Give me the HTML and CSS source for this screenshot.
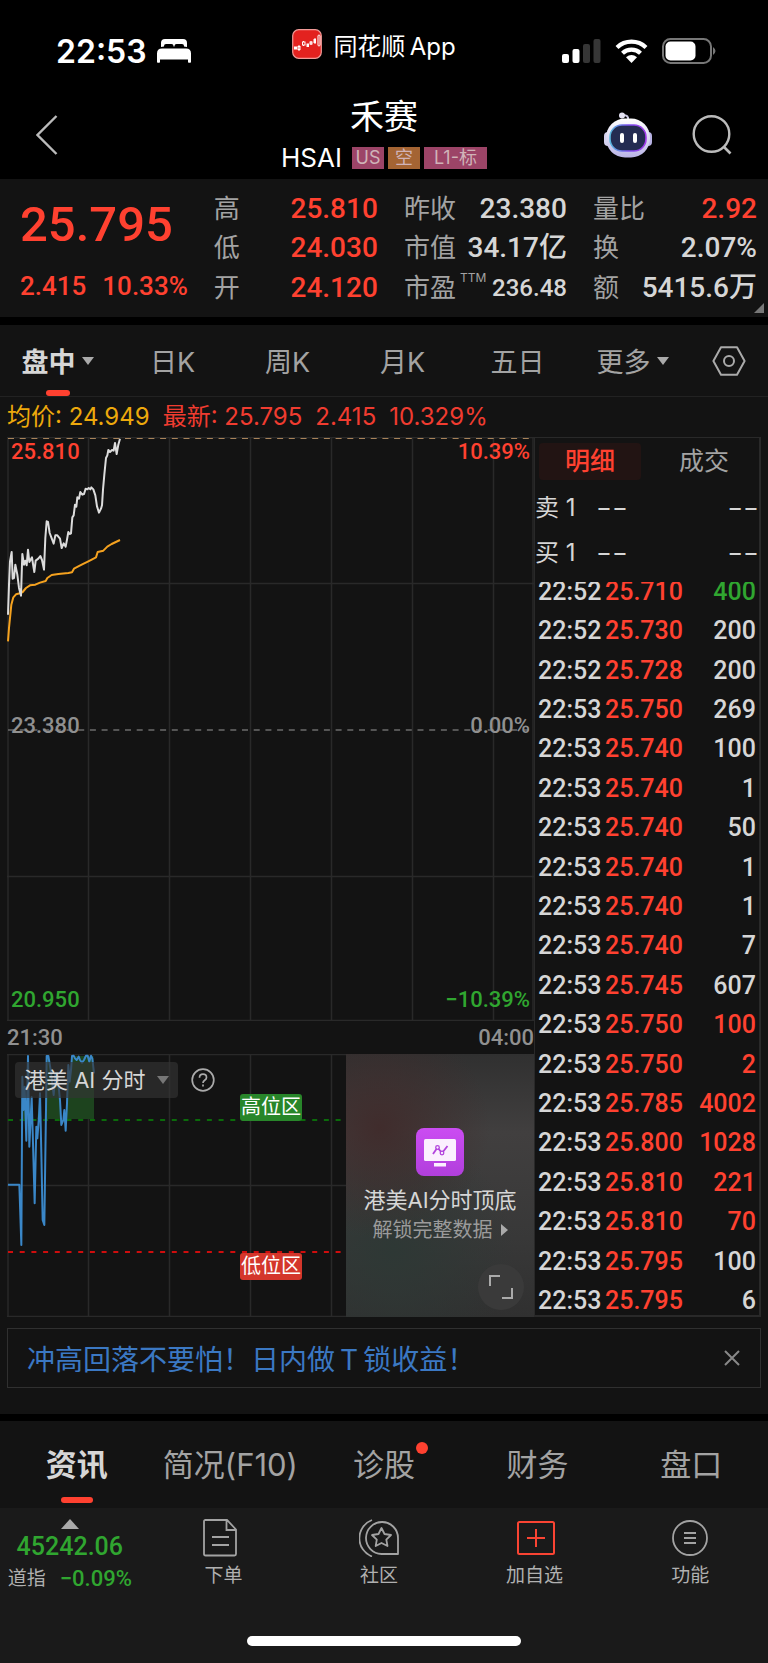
FILE: index.html
```html
<!DOCTYPE html>
<html lang="zh-CN">
<head>
<meta charset="utf-8">
<meta name="viewport" content="width=device-width, initial-scale=1">
<title>禾赛 HSAI</title>
<link rel="stylesheet" href="styles.css">
</head>
<body>
<div class="status">
  <div class="status-left">
    <time class="clock">22:53</time>
    <svg class="bed" viewBox="0 0 34 24" aria-hidden="true"><path fill="#fff" d="M4 8V4q0-4 4-4h18q4 0 4 4v4q-1.500-.5-3-.5V7q0-2-2-2h-5.500q-2 0-2 2v.5h-1V7q0-2-2-2H9Q7 5 7 7v.5q-1.500 0-3 .5zM5 9.500h24q5 0 5 5V23q0 .8-.8.8h-1.400q-.8 0-.8-.8v-2.500H3V23q0 .8-.8.8H.800Q0 23.800 0 23v-8.500q0-5 5-5z"/></svg>
  </div>
  <div class="status-app">
    <svg class="app-icon" viewBox="0 0 30 30" aria-hidden="true"><rect x=".7" y=".7" width="28.600" height="28.600" rx="6" fill="#e3221f" stroke="#f19a97" stroke-width="1.200"/><g stroke="#fff" stroke-width="1" fill="none"><path d="M7 16v6M11.500 12v5M19 12v4M23 9v6"/><rect x="6" y="17.500" width="2" height="3"/><rect x="10.500" y="13" width="2.500" height="3" fill="#e3221f"/><rect x="18" y="13" width="2" height="2"/><rect x="26" y="6" width="2" height="11" rx="1"/></g><path fill="#fff" d="M2 17.500h3v3H2zM14.500 14.500H17V18h-2.500zM21.500 10H24v4h-2.500z"/></svg>
    <span>同花顺&#8201;App</span>
  </div>
  <div class="status-right">
    <svg class="signal" viewBox="0 0 39 24" aria-hidden="true"><rect y="15" width="7" height="9" rx="2" fill="#fff"/><rect x="10.500" y="10" width="7" height="14" rx="2" fill="#fff"/><rect x="21" y="5" width="7" height="19" rx="2" fill="#363636"/><rect x="31.500" width="7" height="24" rx="2" fill="#363636"/></svg>
    <svg class="wifi" viewBox="0 0 33 24" aria-hidden="true"><path d="M2 8.500a21 21 0 0 1 29 0M7.500 14.200a13 13 0 0 1 18 0" fill="none" stroke="#fff" stroke-width="4.200"/><path fill="#fff" d="M11 18.200q5.500-4.600 11 0L16.500 24z"/></svg>
    <svg class="battery" viewBox="0 0 54 26" aria-hidden="true"><rect x="1" y="1" width="48" height="24" rx="7.500" fill="none" stroke="#777" stroke-width="2"/><rect x="3.500" y="3.500" width="30" height="19" rx="5" fill="#fff"/><path d="M51 9q5 4 0 8z" fill="#777"/></svg>
  </div>
</div>

<header class="header">
  <button class="icon-btn back" aria-label="返回"><svg width="22" height="40" viewBox="0 0 22 40"><path d="M20.500 1 1.500 20l19 19" fill="none" stroke="#bbb" stroke-width="2.400"/></svg></button>
  <div class="title">
    <h1>禾赛</h1>
    <div class="code-line"><span class="code">HSAI</span><span class="tag pink">US</span><span class="tag brown">空</span><span class="tag pink wide">L1-标</span></div>
  </div>
  <div class="header-actions">
    <button class="icon-btn" aria-label="智能助手"><svg width="48" height="46" viewBox="0 0 48 46"><defs><linearGradient id="shell" x2="0" y2="1"><stop stop-color="#fff"/><stop offset="1" stop-color="#b9b4e6"/></linearGradient><linearGradient id="rim"><stop stop-color="#58b9dd"/><stop offset=".5" stop-color="#7b4ff0"/><stop offset="1" stop-color="#a33bea"/></linearGradient></defs><path d="M24 8q1-5-5-5" fill="none" stroke="#ccc9e4" stroke-width="2"/><circle cx="18" cy="3.500" r="3" fill="#e4e2f2"/><rect y="20" width="10" height="14" rx="4" fill="#d5d2ef"/><rect x="38" y="20" width="10" height="14" rx="4" fill="#b7b2e3"/><rect x="2" y="6.500" width="44" height="39" rx="19" fill="url(#shell)"/><rect x="6" y="13" width="36" height="26" rx="12" fill="#242c52" stroke="url(#rim)" stroke-width="1.600"/><rect x="16" y="21" width="4" height="10" rx="2" fill="#fff"/><rect x="29" y="21" width="4" height="10" rx="2" fill="#fff"/></svg></button>
    <button class="icon-btn" aria-label="搜索"><svg width="40" height="40" viewBox="0 0 40 40"><circle cx="19.500" cy="19" r="17.800" fill="none" stroke="#bbb" stroke-width="2.400"/><path d="m32 32 6.500 6.500" stroke="#bbb" stroke-width="2.600"/></svg></button>
  </div>
</header>

<section class="quote">
  <div class="price">
    <strong>25.795</strong>
    <div class="change"><span>2.415</span><span>10.33%</span></div>
  </div>
  <dl class="stats">
    <div><dt>高</dt><dd class="up">25.810</dd></div>
    <div><dt>低</dt><dd class="up">24.030</dd></div>
    <div><dt>开</dt><dd class="up">24.120</dd></div>
  </dl>
  <dl class="stats">
    <div><dt>昨收</dt><dd>23.380</dd></div>
    <div><dt>市值</dt><dd>34.17亿</dd></div>
    <div><dt>市盈<sup>TTM</sup></dt><dd class="small">236.48</dd></div>
  </dl>
  <dl class="stats">
    <div><dt>量比</dt><dd class="up">2.92</dd></div>
    <div><dt>换</dt><dd>2.07%</dd></div>
    <div><dt>额</dt><dd>5415.6万</dd></div>
  </dl>
  <svg class="corner" viewBox="0 0 10 10" aria-hidden="true"><path d="M10 0v10H0z" fill="#777"/></svg>
</section>

<nav class="periods" aria-label="周期">
  <button class="active">盘中<svg class="caret" viewBox="0 0 12 8"><path d="M0 0h12L6 8z" fill="#aaa"/></svg></button>
  <button>日K</button>
  <button>周K</button>
  <button>月K</button>
  <button>五日</button>
  <button>更多<svg class="caret" viewBox="0 0 12 8"><path d="M0 0h12L6 8z" fill="#aaa"/></svg></button>
  <button aria-label="设置"><svg width="34" height="30" viewBox="0 0 34 30"><path d="M9 1.200h16L32.600 15 25 28.800H9L1.400 15z" fill="none" stroke="#aaa" stroke-width="2" stroke-linejoin="round"/><circle cx="17" cy="15" r="5" fill="none" stroke="#aaa" stroke-width="2"/></svg></button>
</nav>

<div class="latest">
  <span class="avg">均价: 24.949</span>
  <span>最新: 25.795</span>
  <span>2.415</span>
  <span>10.329%</span>
</div>

<main class="board">
  <div class="charts">
    <div class="chart">
      <svg viewBox="0 0 527 584" role="img" aria-label="分时走势">
        <path d="M1 0v584M81.500 0v584M162.500 0v584M243.500 0v584M324.500 0v584M405.500 0v584M486.500 0v584M526 0v584M0 .5h527M0 146.500h527M0 439.500h527M0 583.500h527" stroke="#292929" stroke-width="1.500"/>
        <path d="M1 1.500h526" stroke="#a8835a" stroke-dasharray="6 5.700"/>
        <path d="M1 293h526" stroke="#6c6c6c" stroke-width="1.500" stroke-dasharray="6 5.700"/>
        <g transform="translate(-7 -9) scale(.33333)" fill="none" stroke-linejoin="round">
          <polyline stroke="#f5a21f" stroke-width="6" points="24,640 27,600 31,560 34,530 40,508 48,499 60,496 68,492 78,480 90,472 106,470 120,464 137,459 142,450 155,441 175,438 205,435 216,433 222,422 245,410 265,400 288,388 293,372 310,368 322,356 335,348 360,336"/>
          <polyline stroke="#dcdcdc" stroke-width="6" points="24,560 27,470 30,400 35,372 38,452 42,450 46,410 52,440 57,480 63,503 67,378 72,410 76,398 80,412 84,365 88,402 96,388 99,408 103,432 107,398 115,392 121,384 126,396 132,425 136,330 140,280 144,282 149,315 154,328 161,347 166,322 172,322 180,332 185,360 191,346 197,356 201,335 205,312 209,318 213,316 217,268 221,262 225,230 229,236 232,208 237,212 241,192 247,200 252,198 257,182 262,184 266,180 271,184 274,178 280,184 286,202 291,235 297,254 303,242 306,232 309,185 313,140 318,90 322,82 325,66 330,72 336,66 341,68 345,45 350,78 355,50 360,32"/>
        </g>
      </svg>
      <div class="scale">
        <div class="up"><span>25.810</span><span>10.39%</span></div>
        <div><span>23.380</span><span>0.00%</span></div>
        <div class="down"><span>20.950</span><span>−10.39%</span></div>
      </div>
    </div>
    <div class="axis"><span>21:30</span><span>04:00</span></div>
    <div class="chart">
      <svg viewBox="0 0 527 263" role="img" aria-label="港美AI分时指标">
        <defs><clipPath id="upper"><rect x="20" y="133" width="270" height="195"/></clipPath></defs>
        <path d="M1 0v263M81.500 0v263M162.500 0v263M243.500 0v263M324.500 0v263M405.500 0v263M486.500 0v263M526 0v263M0 .5h527M0 131.500h527M0 262.500h527" stroke="#292929" stroke-width="1.500"/>
        <path d="M1 66h340" stroke="#0b6b0b" stroke-width="2" stroke-dasharray="5 6.700"/>
        <path d="M1 198h340" stroke="#cf0d0d" stroke-width="2" stroke-dasharray="5 6.700"/>
        <g transform="translate(-7 -44) scale(.33333)">
          <path clip-path="url(#upper)" fill="#1d431e" d="M64 328 67 200 70 300 74 230 79 328 84 138 88 328 95 262 99 328H112L120 250 124 328H134L140 138H145L152 180 161 255 166 190H172L180 270 184 328H199L205 165 209 215 213 180 216 138H280L282 190V328z"/>
          <polyline fill="none" stroke="#3a87c8" stroke-width="6" stroke-linejoin="round" points="24,524 58,524 64,705 67,200 70,300 74,230 79,392 84,138 88,410 95,262 99,400 104,580 109,350 112,385 117,320 120,250 124,430 128,630 133,645 138,300 140,138 145,138 152,180 161,255 166,190 172,190 180,270 184,345 190,330 193,300 197,362 201,280 205,165 209,215 213,180 216,138 221,137 225,145 230,150 236,140 240,150 246,158 252,150 258,137 263,137 268,155 273,137 277,145 282,190"/>
        </g>
      </svg>
      <div class="indicator">
        <button class="picker">港美 AI 分时<svg class="caret" viewBox="0 0 12 8"><path d="M0 0h12L6 8z" fill="#777"/></svg></button>
        <button class="icon-btn" aria-label="帮助"><svg width="24" height="24" viewBox="0 0 24 24" fill="none" stroke="#aaa" stroke-width="1.700"><circle cx="12" cy="12" r="10.800"/><path d="M8.500 9.800q0-3.600 3.500-3.600t3.500 3.200q0 1.600-1.800 2.800Q12 13.300 12 15"/><path d="M12 16.500v2"/></svg></button>
      </div>
      <span class="zone high">高位区</span>
      <span class="zone low">低位区</span>
      <div class="unlock">
        <svg class="unlock-icon" viewBox="0 0 48 48" aria-hidden="true"><defs><linearGradient id="violet" x2="0" y2="1"><stop stop-color="#cb4cf2"/><stop offset="1" stop-color="#b13fdc"/></linearGradient></defs><rect width="48" height="48" rx="8" fill="url(#violet)"/><rect x="8" y="11" width="32" height="22" rx="1.500" fill="#fbf0fe"/><rect x="18" y="35" width="12" height="3.500" fill="#fbf0fe"/><path d="m17 26 4.500-6.500L26 25l5.500-7" fill="none" stroke="#b244dd" stroke-width="1.800"/><circle cx="21.500" cy="19.500" r="1.800" fill="#fbf0fe" stroke="#b244dd" stroke-width="1.300"/><circle cx="26" cy="25" r="1.800" fill="#fbf0fe" stroke="#b244dd" stroke-width="1.300"/></svg>
        <strong>港美AI分时顶底</strong>
        <a href="#unlock">解锁完整数据<svg width="7" height="12" viewBox="0 0 7 12"><path d="M0 0l7 6-7 6z" fill="#aaa"/></svg></a>
        <button class="expand" aria-label="全屏"><svg width="24" height="24" viewBox="0 0 24 24"><path d="M1 11V1h10M23 13v10H13" fill="none" stroke="#aaa" stroke-width="2"/></svg></button>
      </div>
    </div>
  </div>

  <aside class="trades">
    <div class="trade-tabs"><button class="active">明细</button><button>成交</button></div>
    <div class="levels">
      <div class="level"><span>卖 1</span><span>−−</span><span>−−</span></div>
      <div class="level"><span>买 1</span><span>−−</span><span>−−</span></div>
    </div>
    <div class="ticks">
      <table>
        <tbody>
          <tr><td>22:52</td><td>25.710</td><td class="down">400</td></tr>
          <tr><td>22:52</td><td>25.730</td><td>200</td></tr>
          <tr><td>22:52</td><td>25.728</td><td>200</td></tr>
          <tr><td>22:53</td><td>25.750</td><td>269</td></tr>
          <tr><td>22:53</td><td>25.740</td><td>100</td></tr>
          <tr><td>22:53</td><td>25.740</td><td>1</td></tr>
          <tr><td>22:53</td><td>25.740</td><td>50</td></tr>
          <tr><td>22:53</td><td>25.740</td><td>1</td></tr>
          <tr><td>22:53</td><td>25.740</td><td>1</td></tr>
          <tr><td>22:53</td><td>25.740</td><td>7</td></tr>
          <tr><td>22:53</td><td>25.745</td><td>607</td></tr>
          <tr><td>22:53</td><td>25.750</td><td class="up">100</td></tr>
          <tr><td>22:53</td><td>25.750</td><td class="up">2</td></tr>
          <tr><td>22:53</td><td>25.785</td><td class="up">4002</td></tr>
          <tr><td>22:53</td><td>25.800</td><td class="up">1028</td></tr>
          <tr><td>22:53</td><td>25.810</td><td class="up">221</td></tr>
          <tr><td>22:53</td><td>25.810</td><td class="up">70</td></tr>
          <tr><td>22:53</td><td>25.795</td><td>100</td></tr>
          <tr><td>22:53</td><td>25.795</td><td>6</td></tr>
        </tbody>
      </table>
    </div>
  </aside>
</main>

<div class="banner">
  <a href="#promo">冲高回落不要怕！日内做&#8201;T&#8201;锁收益！</a>
  <button class="icon-btn" aria-label="关闭"><svg width="16" height="16" viewBox="0 0 16 16"><path d="m1 1 14 14M15 1 1 15" stroke="#888" stroke-width="2"/></svg></button>
</div>

<nav class="sections" aria-label="资料">
  <button class="active">资讯</button>
  <button>简况(F10)</button>
  <button><span class="dotted">诊股</span></button>
  <button>财务</button>
  <button>盘口</button>
</nav>

<footer class="footer">
  <div class="toolbar">
    <button class="index">
      <svg width="18" height="10" viewBox="0 0 18 10"><path d="M9 0l9 10H0z" fill="#aaa"/></svg>
      <span class="index-value">45242.06</span>
      <span class="index-line"><span>道指</span><span class="index-change">−0.09%</span></span>
    </button>
    <button><svg width="40" height="38" viewBox="0 0 40 38" fill="none" stroke="#a3a3a3" stroke-width="1.800"><path d="M5 1h19l9 9.500V35q0 1.500-1.500 1.500h-29Q1 36.500 1 35V2.500Q1 1 2.500 1H5zM23.500 1v10H33M9 18h17M9 26h17"/></svg>下单</button>
    <button><svg width="40" height="38" viewBox="0 0 40 38" fill="none" stroke="#a3a3a3" stroke-width="1.800"><path d="M39 35H22.500A16 16 0 1 1 39 19z" stroke-linejoin="round"/><path d="M13 1a19.500 19.500 0 0 0 0 36.500"/><path stroke-linejoin="round" d="m22.500 9 3 6 6.500 1-4.700 4.600 1.200 6.400-6-3-5.800 3 1.100-6.400-4.800-4.600 6.500-1z"/></svg>社区</button>
    <button><svg width="40" height="38" viewBox="0 0 40 38" fill="none" stroke="#fa4433" stroke-width="2"><rect x="3" y="3" width="36" height="32" rx="1.500"/><path d="M21 10v18M12 19h18"/></svg>加自选</button>
    <button><svg width="40" height="38" viewBox="0 0 40 38" fill="none" stroke="#a3a3a3" stroke-width="1.800"><circle cx="20" cy="19" r="17"/><path d="M14 14h12M14 19h12M14 24h12"/></svg>功能</button>
  </div>
  <div class="home-bar"></div>
</footer>
</body>
</html>
```
FILE: styles.css
```css
* {
  box-sizing: border-box;
}

:root {
  --bg: #131313;
  --line: #292929;
  --red: #ff4130;
  --green: #30a630;
  --muted: #a3a3a3;
  --light: #d6d6d6;
  --num: Roboto, "Noto Sans CJK SC", sans-serif;
}

body {
  margin: 0;
  background: var(--bg);
  color: var(--light);
  font-family: Inter, "Noto Sans CJK SC", sans-serif;
}

button {
  margin: 0;
  padding: 0;
  border: 0;
  background: none;
  color: inherit;
  font: inherit;
}

a {
  text-decoration: none;
}

svg {
  display: block;
}

h1,
dl,
dd {
  margin: 0;
}

.up {
  color: var(--red);
}

.down {
  color: var(--green);
}

.icon-btn {
  display: flex;
}

.caret {
  width: 12px;
  height: 8px;
}

/* Status bar */
.status {
  display: grid;
  grid-template-columns: 237fr auto 261fr;
  height: 90px;
  padding: 12px 52px 0 56px;
  background: #000;
  color: #fff;
}

.status-left,
.status-right {
  display: flex;
  align-items: center;
}

.status-left {
  gap: 10px;
}

.status-right {
  justify-content: flex-end;
  gap: 14px;
}

.clock {
  font-size: 32px;
  font-weight: 600;
}

.bed {
  width: 34px;
  height: 24px;
}

.status-app {
  display: flex;
  align-items: center;
  gap: 11px;
  padding-bottom: 14px;
  font-size: 24px;
}

.app-icon {
  width: 30px;
  height: 30px;
}

.signal {
  width: 39px;
  height: 24px;
}

.wifi {
  width: 33px;
  height: 24px;
}

.battery {
  width: 54px;
  height: 26px;
}

/* Header */
.header {
  display: grid;
  grid-template-columns: 1fr auto 1fr;
  align-items: center;
  height: 89px;
  padding: 0 36px;
  background: #000;
}

.title {
  display: flex;
  flex-direction: column;
  align-items: center;
  gap: 4px;
}

.title h1 {
  color: #fff;
  font-size: 34px;
  font-weight: 400;
  line-height: 42px;
}

.code-line {
  display: flex;
  align-items: center;
  gap: 4px;
}

.code {
  margin-right: 6px;
  color: #fff;
  font-size: 26px;
  line-height: 32px;
}

.tag {
  min-width: 32px;
  color: #d0b3b8;
  font-size: 18px;
  line-height: 22px;
  text-align: center;
}

.pink {
  background: #9c4467;
}

.brown {
  background: #a46433;
}

.wide {
  min-width: 63px;
}

.header-actions {
  display: flex;
  align-items: center;
  justify-content: flex-end;
  gap: 40px;
}

/* Quote */
.quote {
  position: relative;
  display: grid;
  grid-template-columns: 167fr 164fr 163fr 164fr;
  column-gap: 26px;
  height: 138px;
  padding: 10px 11px 9px 20px;
  font-family: var(--num);
}

.price {
  display: flex;
  flex-direction: column;
  justify-content: space-between;
  padding: 7px 0 1px;
  color: var(--red);
}

.price strong {
  font-size: 49px;
  font-weight: 500;
  line-height: 58px;
}

.change {
  display: flex;
  gap: 16px;
  font-size: 26px;
  font-weight: 500;
  line-height: 42px;
  white-space: nowrap;
}

.stats {
  display: grid;
  grid-template-rows: repeat(3, 1fr);
  white-space: nowrap;
}

.stats div {
  display: flex;
  align-items: center;
  justify-content: space-between;
}

.stats dt {
  color: var(--muted);
  font-size: 26px;
  line-height: 38px;
}

.stats sup {
  margin-left: 4px;
  font-family: Inter, sans-serif;
  font-size: 12px;
  line-height: 12px;
  vertical-align: 15px;
}

.stats dd {
  font-size: 28px;
  font-weight: 500;
  line-height: 38px;
}

.stats .small {
  font-size: 24px;
}

.corner {
  position: absolute;
  right: 4px;
  bottom: 4px;
  width: 10px;
  height: 10px;
}

/* Period tabs */
.periods {
  display: grid;
  grid-template-columns: repeat(6, 115fr) 78fr;
  height: 80px;
  border-top: 8px solid #000;
  border-bottom: 1px solid #222;
  color: var(--muted);
  font-size: 27px;
}

.periods button {
  position: relative;
  display: flex;
  align-items: center;
  justify-content: center;
  gap: 6px;
}

.periods .active,
.sections .active {
  color: var(--light);
  font-weight: 700;
}

.periods .active::after,
.sections .active::after {
  content: "";
  position: absolute;
  bottom: 0;
  left: 50%;
  width: 24px;
  height: 6px;
  margin-left: -12px;
  border-radius: 3px;
  background: var(--red);
}

.latest {
  display: flex;
  gap: 13px;
  padding: 0 7px;
  color: #f03c30;
  font-size: 24px;
  line-height: 40px;
}

.avg {
  color: #eda90c;
}

/* Charts and trades */
.board {
  display: grid;
  grid-template-columns: 527fr 227fr;
  padding: 0 7px;
}

.chart {
  position: relative;
}

.chart > svg {
  width: 100%;
  height: auto;
}

.scale {
  position: absolute;
  inset: 0;
  display: flex;
  flex-direction: column;
  justify-content: space-between;
  padding: 2px 4px 8px;
  color: #909090;
  font-family: var(--num);
  font-size: 22px;
  font-weight: 500;
  line-height: 26px;
}

.scale div,
.axis {
  display: flex;
  justify-content: space-between;
}

.scale .up {
  color: var(--red);
}

.scale .down {
  color: var(--green);
}

.axis {
  color: #909090;
  font-family: var(--num);
  font-size: 22px;
  font-weight: 500;
  line-height: 33px;
}

.indicator {
  position: absolute;
  top: 8px;
  left: 8px;
  display: flex;
  align-items: center;
  gap: 13px;
}

.picker {
  display: flex;
  align-items: center;
  gap: 12px;
  height: 36px;
  padding: 0 9px;
  border-radius: 4px;
  background: #333333a8;
  font-size: 22px;
  line-height: 36px;
}

.zone {
  position: absolute;
  left: 233px;
  width: 62px;
  border-radius: 3px;
  color: #fff;
  font-size: 20px;
  line-height: 27px;
  text-align: center;
}

.high {
  top: 40px;
  background: #28862a;
}

.low {
  top: 199px;
  background: #d4362b;
}

.unlock {
  position: absolute;
  inset: 0 0 0 auto;
  display: flex;
  flex-direction: column;
  align-items: center;
  width: 188px;
  padding-top: 74px;
  background:
    radial-gradient(circle at 18% 28%, #402c2c, transparent 45%),
    radial-gradient(circle at 25% 75%, #2e3835, transparent 50%),
    linear-gradient(#303030, #413f3f 30%, #383838 70%, #303030);
}

.unlock-icon {
  width: 48px;
  height: 48px;
}

.unlock strong {
  margin-top: 8px;
  font-size: 22px;
  font-weight: 400;
  line-height: 32px;
}

.unlock a {
  display: flex;
  align-items: center;
  gap: 8px;
  color: #9b9b9b;
  font-size: 20px;
  line-height: 28px;
}

.expand {
  position: absolute;
  right: 10px;
  bottom: 7px;
  display: grid;
  place-items: center;
  width: 46px;
  height: 46px;
  border-radius: 50%;
  background: #3a3a3a;
}

.trades {
  display: flex;
  flex-direction: column;
  min-width: 0;
  border: solid var(--line);
  border-width: 1px 2px 2px 1px;
}

.trade-tabs {
  display: grid;
  grid-template-columns: 1fr 1fr;
  gap: 12px;
  padding: 5px 4px;
  color: var(--muted);
  font-size: 25px;
  line-height: 37px;
}

.trade-tabs .active {
  border-radius: 4px;
  background: #221413;
  color: var(--red);
  font-weight: 500;
}

.levels {
  padding-bottom: 7px;
}

.level {
  display: grid;
  grid-template-columns: 61px 1fr auto;
  font-size: 24px;
  line-height: 45px;
}

.ticks {
  flex: 1 1 0;
  min-height: 0;
  overflow: hidden;
}

.ticks table {
  width: 100%;
  height: 749px;
  margin-top: -10px;
  border-collapse: collapse;
  font-family: var(--num);
  font-size: 25px;
  line-height: 36px;
}

.ticks td {
  padding: 0 3px 0 0;
  font-weight: 500;
}

.ticks td:first-child {
  width: 70px;
  padding: 0 0 0 3px;
}

.ticks td:nth-child(2) {
  color: var(--red);
}

.ticks td:nth-child(3) {
  text-align: right;
}

/* Promo banner */
.banner {
  display: flex;
  align-items: center;
  justify-content: space-between;
  height: 60px;
  margin: 11px 7px 26px;
  padding: 0 20px 0 19px;
  border: 1px solid #303030;
}

.banner a {
  color: #3b78c3;
  font-size: 28px;
}

/* Section tabs */
.sections {
  display: grid;
  grid-template-columns: repeat(5, 1fr);
  height: 94px;
  border-top: 7px solid #000;
  color: var(--muted);
  font-size: 31px;
}

.sections button {
  position: relative;
  padding-bottom: 4px;
}

.sections .active::after {
  bottom: 5px;
  width: 32px;
  margin-left: -16px;
}

.dotted {
  position: relative;
}

.dotted::after {
  content: "";
  position: absolute;
  top: -4px;
  right: -13px;
  width: 12px;
  height: 12px;
  border-radius: 50%;
  background: var(--red);
}

/* Bottom toolbar */
.footer {
  padding-bottom: 17px;
  background: #1a1a1a;
}

.toolbar {
  display: grid;
  grid-template-columns: 146fr repeat(4, 156fr);
  height: 128px;
  padding-top: 11px;
}

.toolbar button {
  display: flex;
  flex-direction: column;
  align-items: center;
  gap: 5px;
  color: #b0b0b0;
  font-size: 19px;
  line-height: 28px;
}

.toolbar .index {
  gap: 3px;
  padding-right: 6px;
}

.index-value,
.index-change {
  color: var(--green);
  font-family: var(--num);
  font-weight: 500;
}

.index-value {
  font-size: 25px;
  line-height: 30px;
}

.index-line {
  display: flex;
  gap: 14px;
}

.index-change {
  font-size: 22px;
}

.home-bar {
  width: 274px;
  height: 10px;
  margin: 0 auto;
  border-radius: 5px;
  background: #fff;
}
```
